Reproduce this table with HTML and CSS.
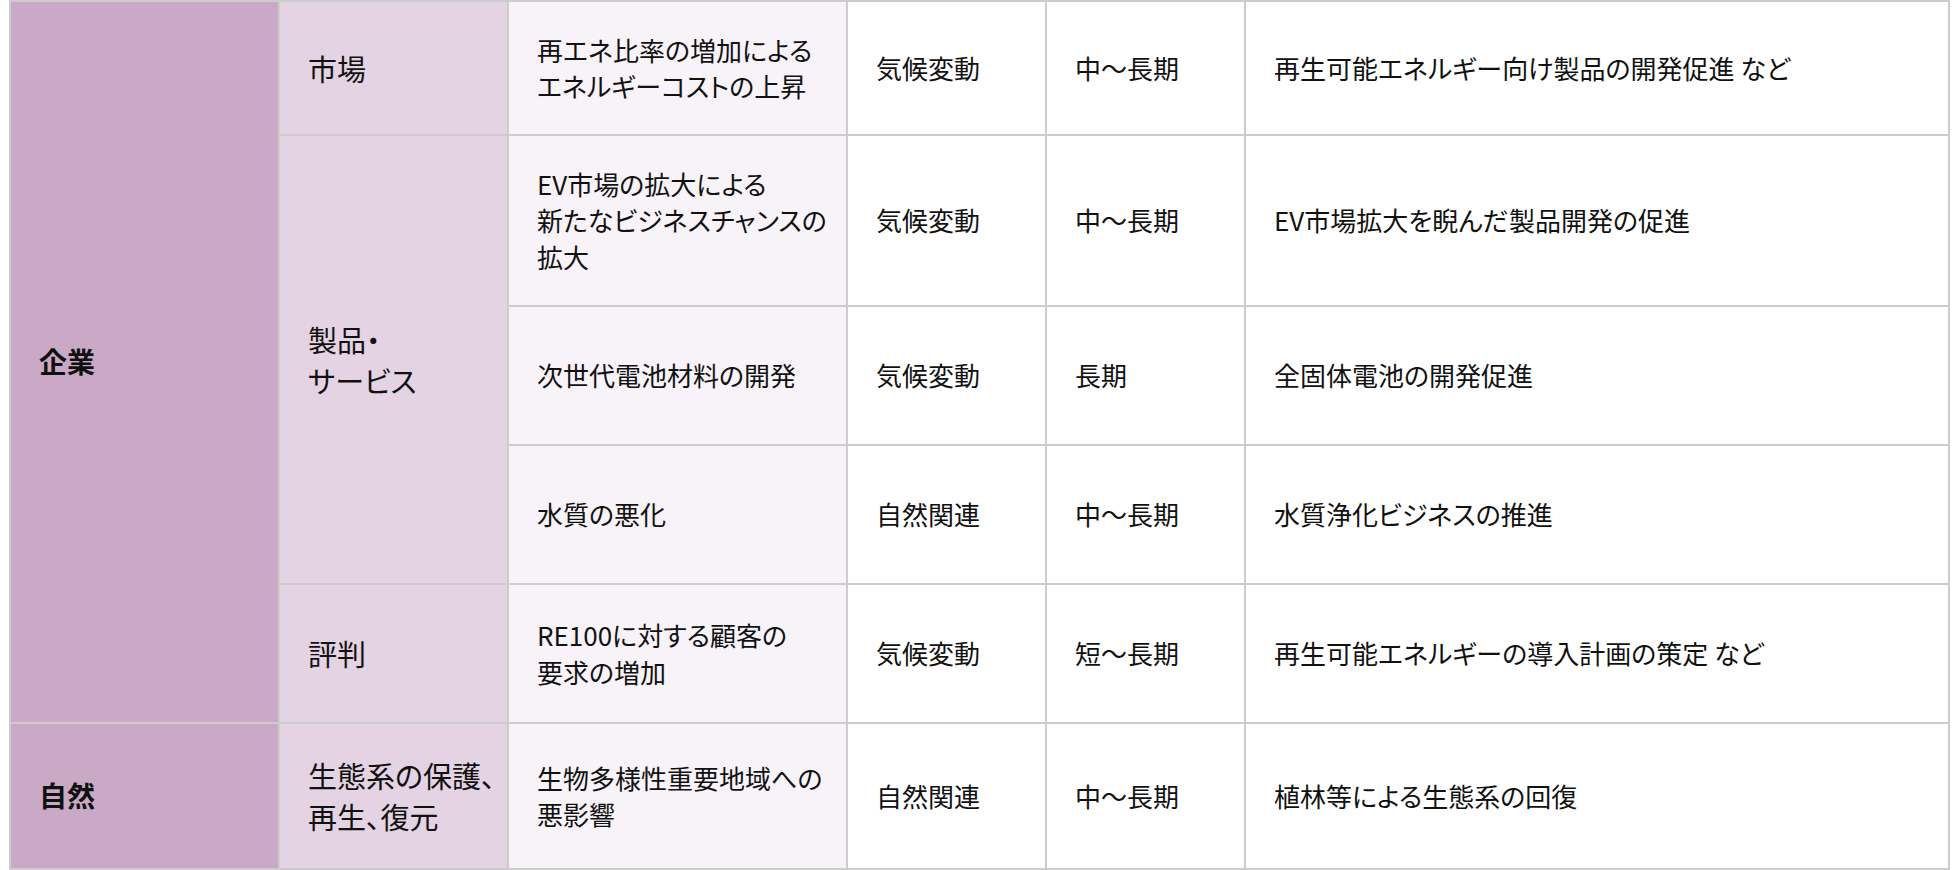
FILE: index.html
```html
<!DOCTYPE html>
<html lang="ja">
<head>
<meta charset="utf-8">
<title>リスク・機会</title>
<link rel="stylesheet" href="styles.css">
</head>
<body>
<div class="wrap">
<table class="risk">
  <tr class="r1">
    <td class="c1 w1" rowspan="5">企業</td>
    <td class="c2 w2">市場</td>
    <td class="c3 w3">再エネ比率の増加による<br>エネルギーコストの上昇</td>
    <td class="w4">気候変動</td>
    <td class="w5">中～長期</td>
    <td class="w6">再生可能エネルギー向け製品の開発促進 など</td>
  </tr>
  <tr class="r2">
    <td class="c2" rowspan="3">製品・<br>サービス</td>
    <td class="c3">EV市場の拡大による<br>新たなビジネスチャンスの<br>拡大</td>
    <td>気候変動</td>
    <td>中～長期</td>
    <td>EV市場拡大を睨んだ製品開発の促進</td>
  </tr>
  <tr class="r3">
    <td class="c3">次世代電池材料の開発</td>
    <td>気候変動</td>
    <td>長期</td>
    <td>全固体電池の開発促進</td>
  </tr>
  <tr class="r3">
    <td class="c3">水質の悪化</td>
    <td>自然関連</td>
    <td>中～長期</td>
    <td>水質浄化ビジネスの推進</td>
  </tr>
  <tr class="r3">
    <td class="c2">評判</td>
    <td class="c3">RE100に対する顧客の<br>要求の増加</td>
    <td>気候変動</td>
    <td>短～長期</td>
    <td>再生可能エネルギーの導入計画の策定 など</td>
  </tr>
  <tr class="r6">
    <td class="c1">自然</td>
    <td class="c2">生態系の保護、<br>再生、復元</td>
    <td class="c3">生物多様性重要地域への<br>悪影響</td>
    <td>自然関連</td>
    <td>中～長期</td>
    <td>植林等による生態系の回復</td>
  </tr>
</table>
</div>
</body>
</html>
```

FILE: styles.css
```css
html, body {
  margin: 0;
  padding: 0;
  background: #ffffff;
}

.wrap {
  padding-left: 9px;
}

.risk {
  border-collapse: separate;
  border-spacing: 0;
  table-layout: fixed;
  width: 1941px;
  border-top: 2px solid #cccccc;
  border-left: 2px solid #cccccc;
  font-family: "Noto Sans CJK JP", "Noto Sans", sans-serif;
  font-size: 26px;
  line-height: 1.4;
  color: #111111;
  font-feature-settings: "palt";
}

.risk td {
  box-sizing: border-box;
  border-right: 2px solid #cccccc;
  border-bottom: 2px solid #cccccc;
  padding: 0 6px 0 28px;
  vertical-align: middle;
  background: #ffffff;
  white-space: nowrap;
}

.risk td.c1 {
  background: #c9a9c6;
  font-weight: 700;
  font-size: 28px;
}

.risk td.c2 {
  background: #e4d4e3;
  font-size: 29px;
}

.risk td.c3 {
  background: #f8f3f8;
}

.w1 { width: 269px; }
.w2 { width: 229px; }
.w3 { width: 339px; }
.w4 { width: 199px; }
.w5 { width: 199px; }
.w6 { width: 704px; }

.r1 { height: 134px; }
.r2 { height: 171px; }
.r3 { height: 139px; }
.r6 { height: 146px; }
```
